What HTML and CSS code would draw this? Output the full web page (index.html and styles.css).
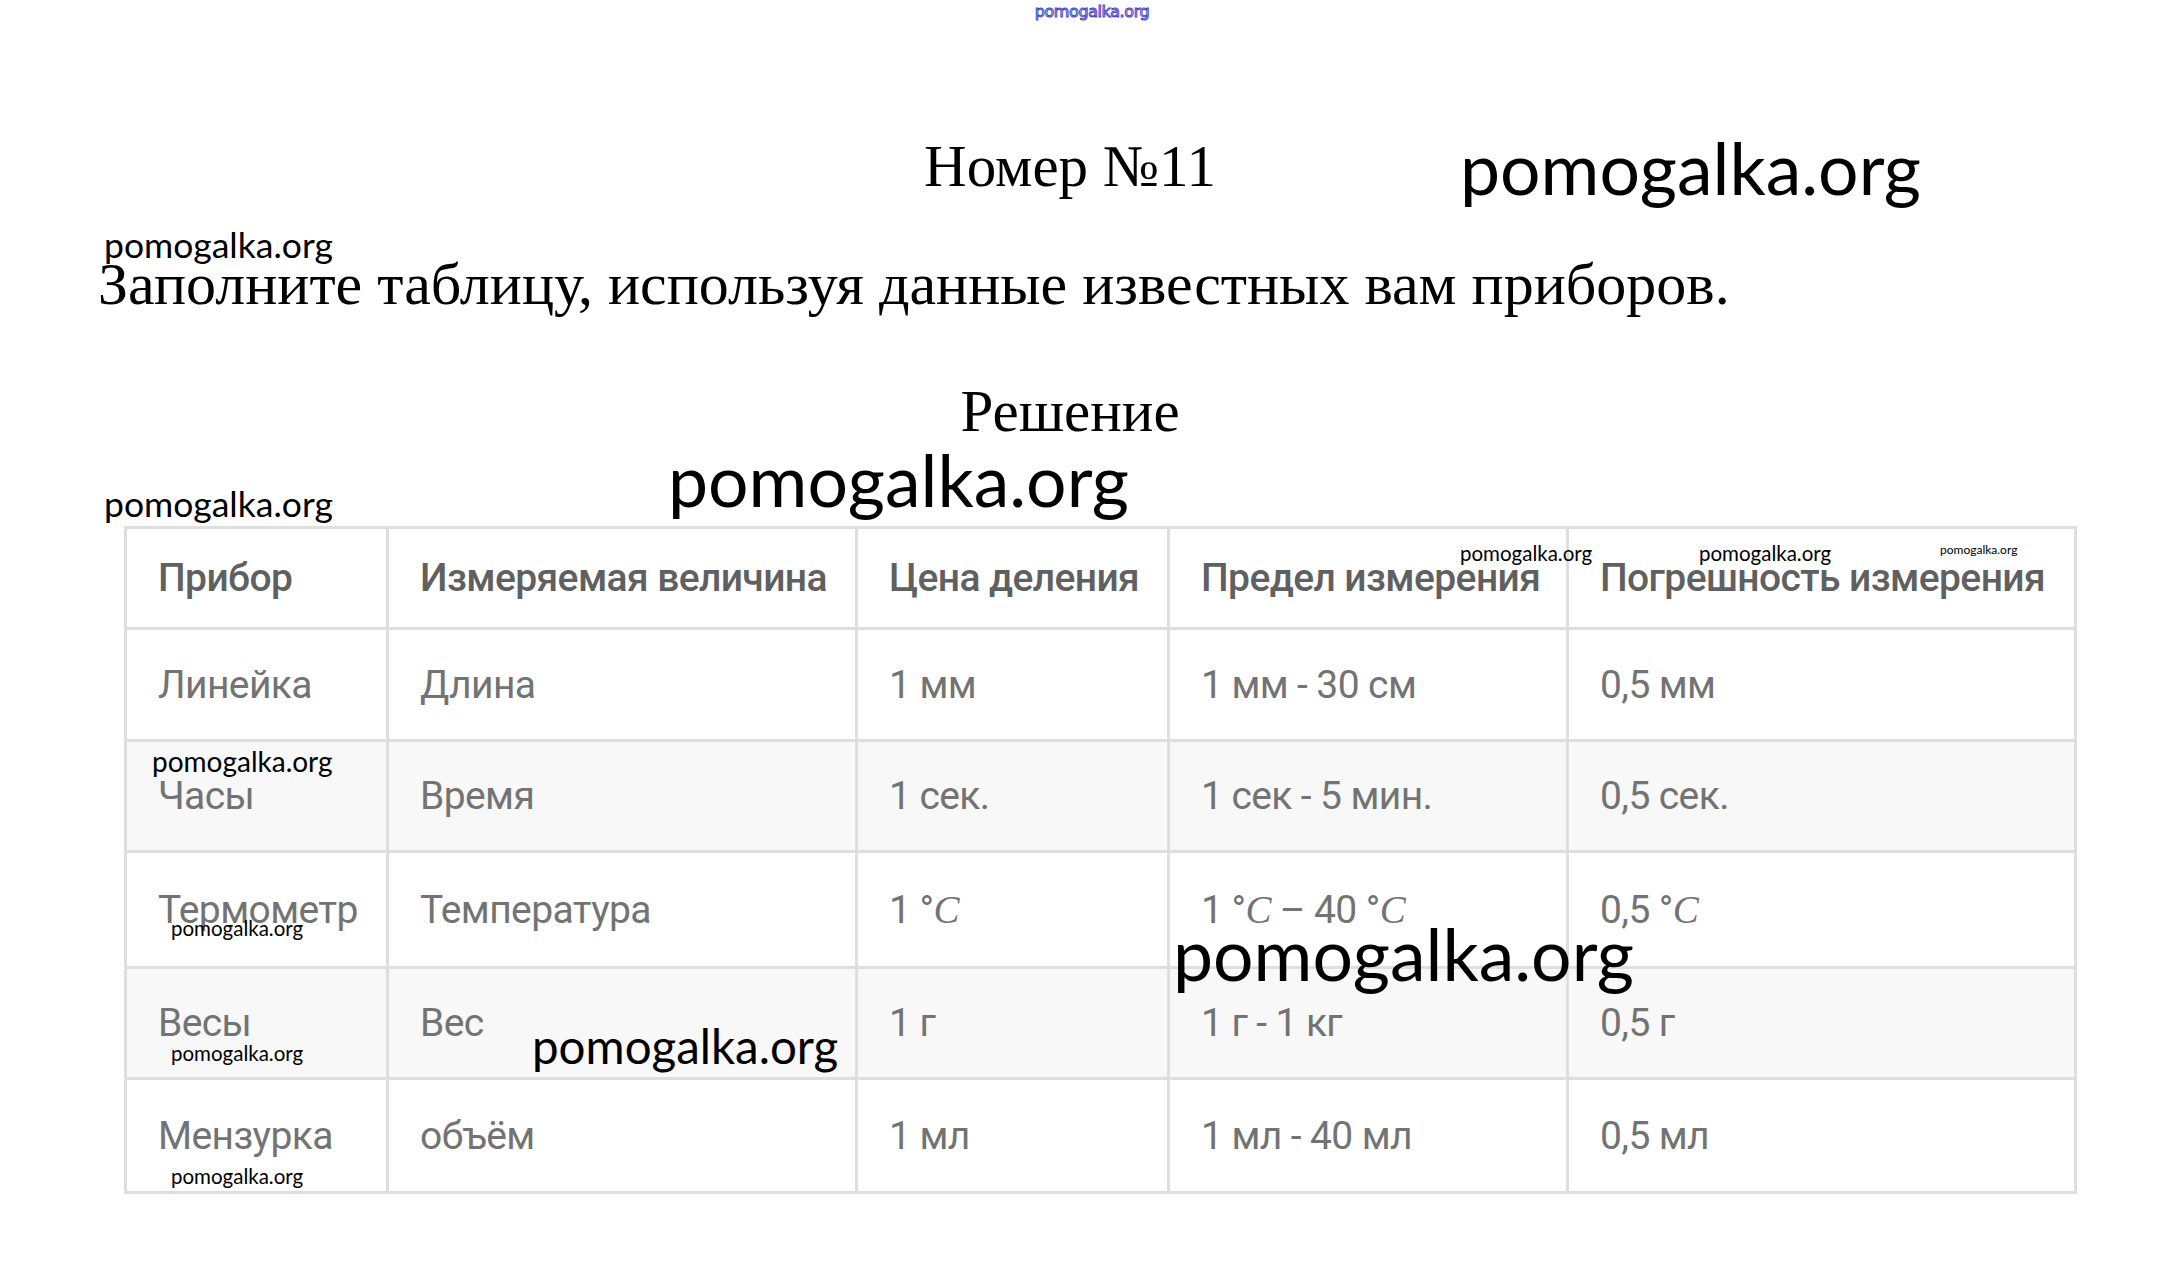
FILE: index.html
```html
<!DOCTYPE html>
<html lang="ru">
<head>
<meta charset="utf-8">
<title>Номер №11</title>
<link rel="stylesheet" href="styles.css">
</head>
<body>
<div class="page">
  <div class="site-mark">pomogalka.org</div>
  <h1 class="heading">Номер №11</h1>
  <p class="task">Заполните таблицу, используя данные известных вам приборов.</p>
  <h2 class="heading solution">Решение</h2>

  <table class="grid">
    <colgroup>
      <col class="c1"><col class="c2"><col class="c3"><col class="c4"><col class="c5">
    </colgroup>
    <thead>
      <tr class="r-head">
        <th>Прибор</th>
        <th>Измеряемая величина</th>
        <th>Цена деления</th>
        <th>Предел измерения</th>
        <th>Погрешность измерения</th>
      </tr>
    </thead>
    <tbody>
      <tr class="r1">
        <td>Линейка</td><td>Длина</td><td>1 мм</td><td>1 мм - 30 см</td><td>0,5 мм</td>
      </tr>
      <tr class="r2 alt">
        <td>Часы</td><td>Время</td><td>1 сек.</td><td>1 сек - 5 мин.</td><td>0,5 сек.</td>
      </tr>
      <tr class="r3">
        <td>Термометр</td><td>Температура</td><td>1 °<i class="m">C</i></td><td>1 °<i class="m">C</i> – 40 °<i class="m">C</i></td><td>0,5 °<i class="m">C</i></td>
      </tr>
      <tr class="r4 alt">
        <td>Весы</td><td>Вес</td><td>1 г</td><td>1 г - 1 кг</td><td>0,5 г</td>
      </tr>
      <tr class="r5">
        <td>Мензурка</td><td>объём</td><td>1 мл</td><td>1 мл - 40 мл</td><td>0,5 мл</td>
      </tr>
    </tbody>
  </table>

  <span class="wm wm-xl wm-1">pomogalka.org</span>
  <span class="wm wm-s wm-2">pomogalka.org</span>
  <span class="wm wm-s wm-3">pomogalka.org</span>
  <span class="wm wm-xl wm-4">pomogalka.org</span>
  <span class="wm wm-xs wm-5">pomogalka.org</span>
  <span class="wm wm-xs wm-6">pomogalka.org</span>
  <span class="wm wm-xxs wm-7">pomogalka.org</span>
  <span class="wm wm-sm wm-8">pomogalka.org</span>
  <span class="wm wm-xs wm-9">pomogalka.org</span>
  <span class="wm wm-xl wm-10">pomogalka.org</span>
  <span class="wm wm-xs wm-11">pomogalka.org</span>
  <span class="wm wm-m wm-12">pomogalka.org</span>
  <span class="wm wm-xs wm-13">pomogalka.org</span>
</div>
</body>
</html>
```

FILE: styles.css
```css
* { box-sizing: border-box; }
html, body { margin: 0; padding: 0; background: #fff; }
body { width: 2184px; height: 1288px; overflow: hidden; }

.page {
  position: relative;
  width: 2184px;
  height: 1288px;
  padding-top: 131px;
  font-family: "Liberation Serif", "Times New Roman", serif;
  color: #000;
}

.site-mark {
  position: absolute;
  top: 0;
  left: 0;
  width: 100%;
  text-align: center;
  font-family: "DejaVu Sans", sans-serif;
  font-size: 16px;
  line-height: 24px;
  letter-spacing: -0.4px;
  color: #fff;
  -webkit-text-stroke: 1px #4646c8;
}

.heading {
  margin: 0;
  padding-right: 44px;
  text-align: center;
  font-weight: normal;
  font-size: 59px;
  line-height: 70px;
}

.task {
  margin: 48px 0 0 0;
  padding-left: 98px;
  font-size: 60px;
  line-height: 70px;
}

.solution { margin-top: 57px; }

.grid {
  margin: 80px 0 0 124px;
  width: 1950px;
  table-layout: fixed;
  border-collapse: collapse;
  font-family: Roboto, "Liberation Sans", sans-serif;
  font-size: 39px;
  letter-spacing: -0.6px;
  color: #737373;
}
.c1 { width: 262px; }
.c2 { width: 469px; }
.c3 { width: 312px; }
.c4 { width: 399px; }
.c5 { width: 508px; }

.grid th, .grid td {
  border: 3px solid #dedede;
  padding: 0 0 0 31px;
  text-align: left;
  vertical-align: middle;
  white-space: nowrap;
}
.grid th { font-weight: 500; color: #606060; }
.r-head { height: 101px; }
.r1 { height: 112px; }
.r2 { height: 111px; }
.r3 { height: 116px; }
.r4 { height: 111px; }
.r5 { height: 114px; }
.alt td { background: #f8f8f8; }
.m { font-family: "Liberation Serif", serif; font-style: italic; }

.wm {
  position: absolute;
  font-family: Lato, "Liberation Sans", sans-serif;
  line-height: 1.2;
  color: #000;
  white-space: nowrap;
}
.wm-xl { font-size: 71.5px; }
.wm-m { font-size: 47.5px; }
.wm-s { font-size: 35.5px; }
.wm-sm { font-size: 28px; }
.wm-xs { font-size: 20.5px; }
.wm-xxs { font-size: 12px; }

.wm-1 { left: 1460px; top: 125px; }
.wm-2 { left: 104px; top: 224px; }
.wm-3 { left: 104px; top: 483px; }
.wm-4 { left: 668px; top: 437px; }
.wm-5 { left: 1460px; top: 541px; }
.wm-6 { left: 1699px; top: 541px; }
.wm-7 { left: 1940px; top: 543px; }
.wm-8 { left: 152px; top: 745px; }
.wm-9 { left: 171px; top: 916px; }
.wm-10 { left: 1173px; top: 911px; }
.wm-11 { left: 171px; top: 1041px; }
.wm-12 { left: 532px; top: 1017px; }
.wm-13 { left: 171px; top: 1164px; }
```
